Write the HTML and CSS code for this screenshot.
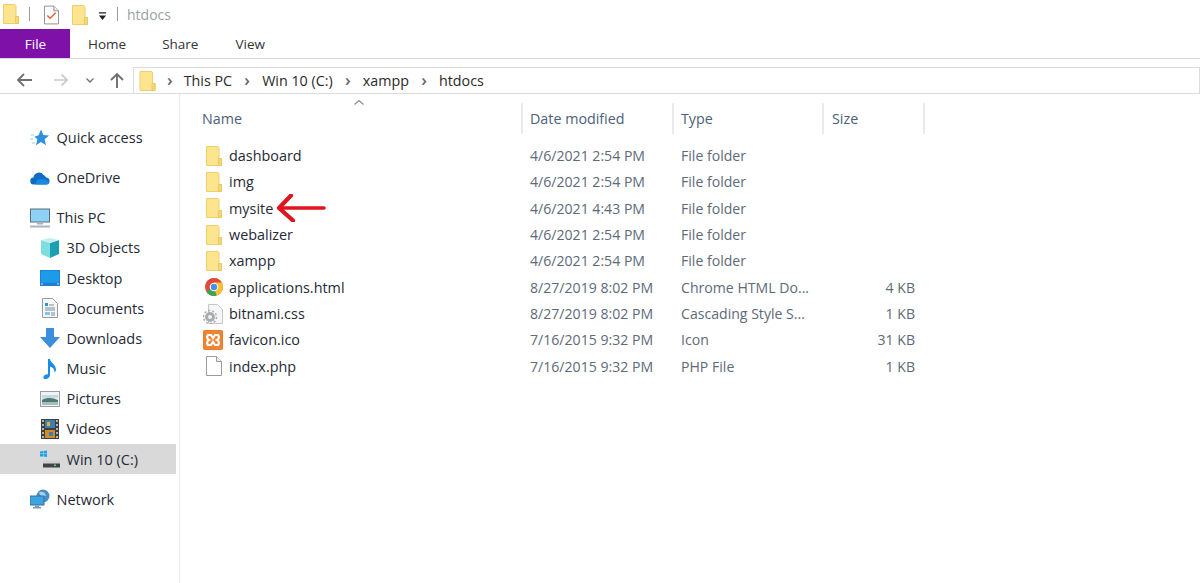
FILE: index.html
```html
<!DOCTYPE html>
<html lang="en">
<head>
<meta charset="utf-8">
<title>htdocs</title>
<link rel="stylesheet" href="styles.css">
</head>
<body>
<svg class="defs" width="0" height="0" aria-hidden="true">
  <defs>
    <symbol id="folder" viewBox="0 0 16 20">
      <path d="M.5.5h11.5l1 1v11h2.500v7H.5z" fill="#fde58f" stroke="#efcf6c"/>
      <path d="M12.500 12.500h3v7h-3z" fill="#f6d873" stroke="#e9c868"/>
    </symbol>
  </defs>
</svg>
<div class="window">
  <header class="titlebar">
    <svg class="t-folder-a"><use href="#folder"/></svg>
    <span class="t-sep t-sep-a"></span>
    <svg class="t-check" viewBox="0 0 16 20">
      <path d="M.5.5h10l5 5v14H.5z" fill="#fff" stroke="#8a8a8a"/>
      <path d="M10.500.5v5h5" fill="#eee" stroke="#8a8a8a"/>
      <path d="M3.500 10.500l3 3 6-6" fill="none" stroke="#e8603c" stroke-width="1.600"/>
    </svg>
    <svg class="t-folder-b"><use href="#folder"/></svg>
    <svg class="t-drop" viewBox="0 0 10 10">
      <path d="M1 1h8" stroke="#222" stroke-width="1.400"/>
      <path d="M1 4h8L5 9z" fill="#222"/>
    </svg>
    <span class="t-sep t-sep-b"></span>
    <span class="t-title">htdocs</span>
  </header>
  <nav class="ribbon">
    <span class="tab tab-file">File</span>
    <span class="tab tab-home">Home</span>
    <span class="tab tab-share">Share</span>
    <span class="tab tab-view">View</span>
  </nav>
  <div class="addressrow">
    <svg class="nav-btn nav-back" viewBox="0 0 16 14"><path d="M16 7H2M8 1L2 7l6 6" fill="none" stroke="#6f6f6f" stroke-width="1.800"/></svg>
    <svg class="nav-btn nav-fwd" viewBox="0 0 16 14"><path d="M0 7h14M8 1l6 6-6 6" fill="none" stroke="#c9c9c9" stroke-width="1.800"/></svg>
    <svg class="nav-chev" viewBox="0 0 8 5"><path d="M.5.5L4 4 7.500.5" fill="none" stroke="#6f6f6f" stroke-width="1.300"/></svg>
    <svg class="nav-btn nav-up" viewBox="0 0 14 16"><path d="M7 16V2M1 8l6-6 6 6" fill="none" stroke="#6f6f6f" stroke-width="1.900"/></svg>
    <div class="addressbox">
      <svg class="addr-folder"><use href="#folder"/></svg>
      <span class="crumb-sep">›</span><span class="crumb">This PC</span>
      <span class="crumb-sep">›</span><span class="crumb">Win 10 (C:)</span>
      <span class="crumb-sep">›</span><span class="crumb">xampp</span>
      <span class="crumb-sep">›</span><span class="crumb">htdocs</span>
    </div>
  </div>
  <div class="body">
    <aside class="sidebar">
      <div class="nav-item top first">
        <svg class="nav-icon" viewBox="0 0 20 20"><path d="M11 1.500l2.300 5.600 5.700.4-4.400 3.800 1.400 6-5-3.200-5 3.200 1.400-6-3-2.600 4.200-1.400z" fill="#2f8fe0"/><path d="M1 7h3M0 11h3M2 15h3" stroke="#9cc9ef" stroke-width="1"/></svg>
        <span>Quick access</span>
      </div>
      <div class="nav-item top gap">
        <svg class="nav-icon" viewBox="0 0 20 14"><path d="M4 13.500a3.500 3.500 0 0 1-.5-7A5.500 5.500 0 0 1 13.500 4a4.500 4.500 0 0 1 2.500 2.500 3.500 3.500 0 0 1 0 7z" fill="#0f6cc4"/><path d="M6 13.500c-1-3 2-6 5-5 3-1 7 1 8 3-1 2-2 2-3 2z" fill="#1a8ae0"/></svg>
        <span>OneDrive</span>
      </div>
      <div class="nav-item top gap">
        <svg class="nav-icon" viewBox="0 0 20 19"><rect x=".5" y=".5" width="19" height="13" fill="#8fd0f5" stroke="#5b6f80"/><path d="M7 14h6v2H7z" fill="#a8b4bd"/><path d="M0 17h20v2H0z" fill="#a8b4bd"/></svg>
        <span>This PC</span>
      </div>
      <div class="nav-item sub">
        <svg class="nav-icon" viewBox="0 0 20 20"><path d="M10 5l9-3v14l-9 4z" fill="#1a9fb3"/><path d="M10 5L1 2v14l9 4z" fill="#7fdde0"/><path d="M1 2l9-2 9 2-9 3z" fill="#c2f0f0"/></svg>
        <span>3D Objects</span>
      </div>
      <div class="nav-item sub">
        <svg class="nav-icon" viewBox="0 0 20 16"><rect width="20" height="16" fill="#1f7dd1"/><rect x=".8" y=".8" width="18.400" height="12" fill="#1b9be8"/><path d="M1 14h2M17 14h2" stroke="#cfe8f8" stroke-width="1"/></svg>
        <span>Desktop</span>
      </div>
      <div class="nav-item sub">
        <svg class="nav-icon" viewBox="0 0 16 20"><path d="M.5.5h10l5 5v14H.5z" fill="#f5f7f8" stroke="#9a9a9a"/><path d="M3 5h3v3H3z" fill="#2f8fe0"/><path d="M7 7h5M3 10h10M3 12h10" stroke="#7a8a96"/><path d="M3 14h5v3H3z" fill="#7fc7ee"/><path d="M9 15h4M9 17h4" stroke="#7a8a96"/></svg>
        <span>Documents</span>
      </div>
      <div class="nav-item sub">
        <svg class="nav-icon" viewBox="0 0 20 20"><path d="M6 0h8v9h6L10 20 0 9h6z" fill="#3d8fdd"/></svg>
        <span>Downloads</span>
      </div>
      <div class="nav-item sub">
        <svg class="nav-icon" viewBox="0 0 14 20"><path d="M5 0h2c.5 4 6 5 6 11 0 1-1 2-1.500 2 0-3-2-5-4.500-5.500V16c0 2-2 4-4.500 4S0 18.500 1 17c.7-1 2.500-2 4-1.500z" fill="#1a8ce8"/></svg>
        <span>Music</span>
      </div>
      <div class="nav-item sub">
        <svg class="nav-icon" viewBox="0 0 20 16"><rect x=".5" y=".5" width="19" height="15" fill="#eef3f6" stroke="#9c9c9c"/><path d="M2 4h16v3c-5 0-9 0-16 2z" fill="#c4d9e6"/><path d="M2 9c6-3 11-2 16 0v2H2z" fill="#4f7a6b"/><path d="M2 11h16v3H2z" fill="#a7bcc1"/></svg>
        <span>Pictures</span>
      </div>
      <div class="nav-item sub">
        <svg class="nav-icon" viewBox="0 0 18 20"><rect width="18" height="20" fill="#3c3f42"/><path d="M1 2h2M1 6h2M1 10h2M1 14h2M1 18h2M15 2h2M15 6h2M15 10h2M15 14h2M15 18h2" stroke="#ddd" stroke-width="1.500"/><rect x="4" y="1" width="10" height="8" fill="#3f7fb0"/><rect x="4" y="11" width="10" height="8" fill="#d28a2a"/><path d="M6 3h3v4H6z" fill="#e0b040"/><path d="M8 13h4v4H8z" fill="#3f7fb0"/></svg>
        <span>Videos</span>
      </div>
      <div class="nav-item sub selected">
        <svg class="nav-icon" viewBox="0 0 20 17"><path d="M0 1l3-.5V3H0zM3.500.4L7 0v3H3.500zM0 3.500h3V6H0zM3.500 3.500H7V6.500L3.500 6z" fill="#1aa3e8"/><rect x="3" y="10" width="17" height="3" fill="#d0d0d0"/><rect x="3" y="13" width="17" height="4" fill="#3e4346"/><rect x="14" y="14" width="2" height="1.500" fill="#4fe04f"/></svg>
        <span>Win 10 (C:)</span>
      </div>
      <div class="nav-item top gap">
        <svg class="nav-icon" viewBox="0 0 20 19"><circle cx="13" cy="6.500" r="6.500" fill="#4a90c8"/><path d="M9 3c3-2 6 0 7 3-2 2-6 1-7-3z" fill="#a9d0ea"/><rect x="0" y="6.500" width="14" height="9" fill="#3aa4e4" stroke="#3b6f96"/><path d="M5 16h4v1.500H5zM3 17.500h8V19H3z" fill="#7f98aa"/></svg>
        <span>Network</span>
      </div>
    </aside>
    <main class="files">
      <div class="file-head">
        <span class="col col-name">Name</span>
        <span class="col col-date">Date modified</span>
        <span class="col col-type">Type</span>
        <span class="col col-size">Size</span>
        <svg class="sort" viewBox="0 0 10 5"><path d="M.5 4.500L5 .5l4.500 4" fill="none" stroke="#8a8a8a" stroke-width="1.100"/></svg>
      </div>
      <div class="file-list">
        <div class="file-row"><span class="fname"><svg class="ficon"><use href="#folder"/></svg>dashboard</span><span class="fdate">4/6/2021 2:54 PM</span><span class="ftype">File folder</span><span class="fsize"></span></div>
        <div class="file-row"><span class="fname"><svg class="ficon"><use href="#folder"/></svg>img</span><span class="fdate">4/6/2021 2:54 PM</span><span class="ftype">File folder</span><span class="fsize"></span></div>
        <div class="file-row"><span class="fname"><svg class="ficon"><use href="#folder"/></svg>mysite</span><span class="fdate">4/6/2021 4:43 PM</span><span class="ftype">File folder</span><span class="fsize"></span></div>
        <div class="file-row"><span class="fname"><svg class="ficon"><use href="#folder"/></svg>webalizer</span><span class="fdate">4/6/2021 2:54 PM</span><span class="ftype">File folder</span><span class="fsize"></span></div>
        <div class="file-row"><span class="fname"><svg class="ficon"><use href="#folder"/></svg>xampp</span><span class="fdate">4/6/2021 2:54 PM</span><span class="ftype">File folder</span><span class="fsize"></span></div>
        <div class="file-row"><span class="fname"><svg class="ficon wide" viewBox="0 0 18 18"><circle cx="9" cy="9" r="9" fill="#e04a3a"/><path d="M9 9L1.200 13.500A9 9 0 0 0 9 18c1 0 1.500 0 2.500-.5z" fill="#3aa655"/><path d="M9 0a9 9 0 0 1 7.800 4.500H9zM9 9l2.500 8.500A9 9 0 0 0 16.800 4.500H9z" fill="#fbc02d"/><path d="M9 0a9 9 0 0 0-7.800 4.500L5 9l4-4.500h7.800A9 9 0 0 0 9 0z" fill="#e04a3a"/><circle cx="9" cy="9" r="4.300" fill="#fff"/><circle cx="9" cy="9" r="3.200" fill="#4a8fe8"/></svg>applications.html</span><span class="fdate">8/27/2019 8:02 PM</span><span class="ftype">Chrome HTML Do...</span><span class="fsize">4 KB</span></div>
        <div class="file-row"><span class="fname"><svg class="ficon wider" viewBox="0 0 20 20"><path d="M5.500.5h9l5 5v14h-14z" fill="#f6f6f6" stroke="#c6c6c6"/><circle cx="7" cy="13" r="5" fill="#a8adb0"/><circle cx="7" cy="13" r="6.500" fill="none" stroke="#a8adb0" stroke-width="1.500" stroke-dasharray="2 2"/><circle cx="7" cy="13" r="2" fill="#f2f2f2"/></svg>bitnami.css</span><span class="fdate">8/27/2019 8:02 PM</span><span class="ftype">Cascading Style S...</span><span class="fsize">1 KB</span></div>
        <div class="file-row"><span class="fname"><svg class="ficon wider" viewBox="0 0 20 20"><rect width="20" height="20" rx="2" fill="#ea7a2c"/><rect x="1" y="1" width="18" height="18" rx="1" fill="#f08433"/><path d="M5 5h3l2 3 2-3h3c1.500 2 1 4-1 5 2 1 2.500 3 1 5h-3l-2-3-2 3H5c-1.500-2-1-4 1-5-2-1-2.500-3-1-5z" fill="none" stroke="#fff" stroke-width="2.200"/></svg>favicon.ico</span><span class="fdate">7/16/2015 9:32 PM</span><span class="ftype">Icon</span><span class="fsize">31 KB</span></div>
        <div class="file-row"><span class="fname"><svg class="ficon" viewBox="0 0 16 20"><path d="M.5.5h10l5 5v14H.5z" fill="#fff" stroke="#9a9a9a"/><path d="M10.500.5v5h5" fill="#f0f0f0" stroke="#9a9a9a"/></svg>index.php</span><span class="fdate">7/16/2015 9:32 PM</span><span class="ftype">PHP File</span><span class="fsize">1 KB</span></div>
      </div>
      <svg class="arrow" viewBox="0 0 50 28"><path d="M48 14H4" fill="none" stroke="#e0141c" stroke-width="3.600" stroke-linecap="round"/><path d="M15 1.500L3 14l14 12.500" fill="none" stroke="#e0141c" stroke-width="4.200" stroke-linecap="round" stroke-linejoin="round"/></svg>
    </main>
  </div>
</div>
</body>
</html>
```
FILE: styles.css
```css
* { box-sizing: border-box; }
html, body { margin: 0; height: 100%; background: #fff; overflow: hidden; }
body { font-family: "Open Sans", "Noto Sans", sans-serif; font-size: 14px; color: #1f2a36; }
.defs { position: absolute; }
.window { width: 1200px; height: 583px; display: flex; flex-direction: column; }

.titlebar { height: 29px; display: flex; align-items: center; padding-top: 1px; }
.t-folder-a { width: 16px; height: 20px; margin-left: 3px; margin-top: -3px; }
.t-sep { width: 1px; height: 14px; background: #9a9a9a; margin-top: -2px; }
.t-sep-a { margin-left: 10px; }
.t-check { width: 15px; height: 20px; margin-left: 14px; margin-top: -1px; }
.t-folder-b { width: 16px; height: 20px; margin-left: 13px; margin-top: -1px; }
.t-drop { width: 9px; height: 9px; margin-left: 10px; margin-top: 2px; }
.t-sep-b { margin-left: 10px; }
.t-title { margin-left: 9px; color: #9a9fa5; font-size: 14px; margin-top: -1px; }

.ribbon { height: 30px; display: flex; align-items: stretch; border-bottom: 1px solid #d9d9d9; font-size: 13.500px; }
.tab { display: flex; align-items: center; color: #333; }
.tab-file { width: 70px; background: #7e12a8; color: #fff; justify-content: center; padding-left: 1px; }
.tab-home { margin-left: 18px; }
.tab-share { margin-left: 36px; }
.tab-view { margin-left: 37px; }

.addressrow { height: 35px; display: flex; align-items: center; border-bottom: 1px solid #dcdcdc; }
.nav-btn { flex: none; }
.nav-back { width: 16px; height: 14px; margin-left: 16px; margin-top: 8px; }
.nav-fwd { width: 15px; height: 14px; margin-left: 22px; margin-top: 8px; }
.nav-chev { width: 8px; height: 5px; margin-left: 17px; margin-top: 8px; }
.nav-up { width: 14px; height: 16px; margin-left: 16px; margin-top: 8px; }
.addressbox { flex: 1; align-self: flex-end; height: 26px; margin-left: 9px; border: 1px solid #dcdcdc; border-bottom: 0; display: flex; align-items: center; font-size: 14.300px; color: #2a2a2a; }
.addr-folder { width: 17px; height: 20px; margin-left: 5px; }
.crumb-sep { color: #666; font-size: 17px; line-height: 1; margin-left: 11px; margin-right: 11px; font-weight: 600; margin-top: -2px; }
.crumb + .crumb-sep { margin-left: 12.200px; margin-right: 12.200px; }

.body { flex: 1; display: flex; min-height: 0; }
.sidebar { width: 180px; flex: none; border-right: 1px solid #ececec; padding-top: 28.600px; padding-right: 3px; }
.nav-item { height: 30.200px; display: flex; align-items: center; font-size: 14.500px; }
.nav-item.top { padding-left: 30px; }
.nav-item.gap { margin-top: 9.800px; }
.nav-item.sub { padding-left: 40px; }
.nav-icon { width: 20px; height: 20px; flex: none; margin-right: 6.500px; }
.selected { background: #d9d9d9; }

.files { flex: 1; position: relative; padding-top: 9px; }
.file-head { height: 31px; display: flex; font-size: 14.300px; color: #4c607a; position: relative; }
.col { display: flex; align-items: center; padding-left: 7px; border-right: 2px solid #eaeaea; }
.col-name { width: 343px; padding-left: 22px; }
.col-date { width: 151px; }
.col-type { width: 150px; }
.col-size { width: 101px; padding-left: 8px; }
.sort { position: absolute; left: 174px; top: -3px; width: 10px; height: 5px; }
.file-list { padding-top: 8.400px; }
.file-row { height: 26.350px; display: grid; grid-template-columns: 350px 151px 151px 83px; align-items: center; font-size: 14.400px; }
.fname { display: flex; align-items: center; padding-left: 26px; color: #1f2a36; }
.ficon { width: 16px; height: 20px; flex: none; margin-right: 7px; }
.ficon.wide { width: 18px; height: 18px; margin-left: -1px; margin-right: 6px; }
.ficon.wider { width: 20px; height: 20px; margin-left: -3px; margin-right: 6px; }
.fdate, .ftype, .fsize { color: #5e6a78; font-size: 14.100px; }
.fsize { text-align: right; }
.arrow { position: absolute; left: 96px; top: 100px; width: 50px; height: 28px; }
```
